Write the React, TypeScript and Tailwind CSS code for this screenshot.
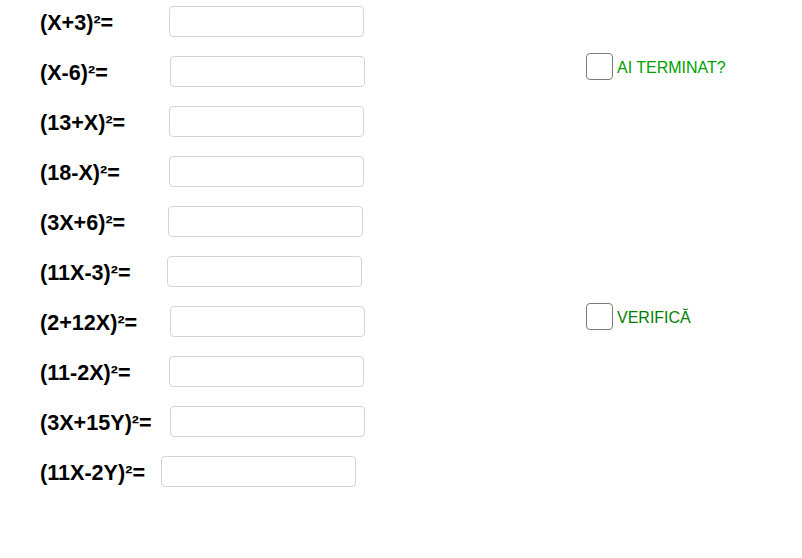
const rows = [
  { label: '(X+3)²=', w: 'w-[129px]' },
  { label: '(X-6)²=', w: 'w-[130px]' },
  { label: '(13+X)²=', w: 'w-[129px]' },
  { label: '(18-X)²=', w: 'w-[129px]' },
  { label: '(3X+6)²=', w: 'w-[128px]' },
  { label: '(11X-3)²=', w: 'w-[127px]' },
  { label: '(2+12X)²=', w: 'w-[130px]' },
  { label: '(11-2X)²=', w: 'w-[129px]' },
  { label: '(3X+15Y)²=', w: 'w-[130px]' },
  { label: '(11X-2Y)²=', w: 'w-[121px]' },
]

function CheckRow({ text, color }: { text: string; color: string }) {
  return (
    <label className="flex items-center gap-[4px] cursor-pointer">
      <span className="w-[27px] h-[27px] rounded-[4px] border border-[#7c7c7c] bg-white shrink-0" />
      <span className={`text-[16px] leading-none pt-[2px] ${color}`}>{text}</span>
    </label>
  )
}

export default function App() {
  return (
    <div className="w-[802px] h-[558px] bg-white flex font-['Liberation_Sans',Arial,sans-serif] text-black overflow-hidden">
      {/* exercise rows */}
      <div className="flex flex-col gap-[19px] pl-[40px] pt-[6px] w-[546px] shrink-0">
        {rows.map((r) => (
          <div key={r.label} className="flex items-center h-[31px]">
            <span className={`${r.w} shrink-0 text-[21.6px] font-bold leading-none pt-[2px]`}>{r.label}</span>
            <input
              type="text"
              className="w-[195px] h-[31px] rounded-[4px] border border-[#d4d4d4] bg-white outline-none px-2 text-[16px]"
            />
          </div>
        ))}
      </div>

      {/* checkboxes */}
      <div className="flex flex-col gap-[223px] pl-[40px] pt-[53px]">
        <CheckRow text="AI TERMINAT?" color="text-[#00a000]" />
        <CheckRow text="VERIFICĂ" color="text-[#007f00]" />
      </div>
    </div>
  )
}
